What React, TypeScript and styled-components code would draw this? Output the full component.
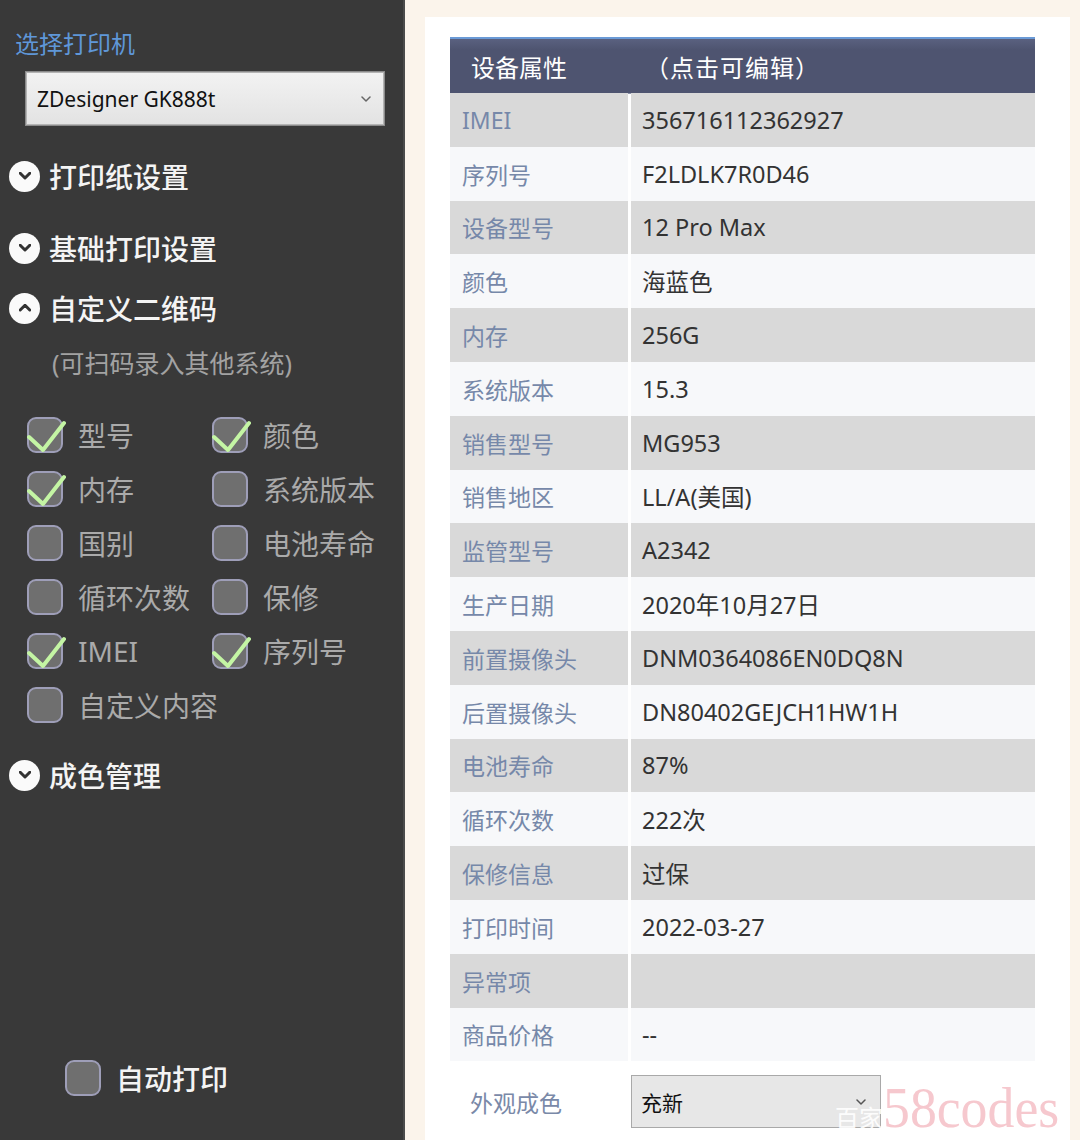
import React from "react"
import styled, { createGlobalStyle } from "styled-components"

const GlobalStyle = createGlobalStyle`
  html, body {
    margin: 0;
    padding: 0;
  }
  body {
    font-family: "Noto Sans", "Noto Sans CJK SC", sans-serif;
    background: #fbf4eb;
  }
`

const sections = [
  { title: "打印纸设置", open: false, top: 29 },
  { title: "基础打印设置", open: false, top: 28 },
]

const qrOptions = [
  { label: "型号", checked: true },
  { label: "颜色", checked: true },
  { label: "内存", checked: true },
  { label: "系统版本", checked: false },
  { label: "国别", checked: false },
  { label: "电池寿命", checked: false },
  { label: "循环次数", checked: false },
  { label: "保修", checked: false },
  { label: "IMEI", checked: true },
  { label: "序列号", checked: true },
  { label: "自定义内容", checked: false },
]

const attributes = [
  ["IMEI", "356716112362927"],
  ["序列号", "F2LDLK7R0D46"],
  ["设备型号", "12 Pro Max"],
  ["颜色", "海蓝色"],
  ["内存", "256G"],
  ["系统版本", "15.3"],
  ["销售型号", "MG953"],
  ["销售地区", "LL/A(美国)"],
  ["监管型号", "A2342"],
  ["生产日期", "2020年10月27日"],
  ["前置摄像头", "DNM0364086EN0DQ8N"],
  ["后置摄像头", "DN80402GEJCH1HW1H"],
  ["电池寿命", "87%"],
  ["循环次数", "222次"],
  ["保修信息", "过保"],
  ["打印时间", "2022-03-27"],
  ["异常项", ""],
  ["商品价格", "--"],
]

function Chevron({ up = false, size = 12, color = "#333", width = 3 }) {
  return (
    <svg width={size} height={size * 0.6} viewBox="0 0 10 6" fill="none">
      <path
        d={up ? "M1 5 L5 1 L9 5" : "M1 1 L5 5 L9 1"}
        stroke={color}
        strokeWidth={width}
        strokeLinecap="round"
        strokeLinejoin="round"
        vectorEffect="non-scaling-stroke"
      />
    </svg>
  )
}

function CheckBox({ checked }: { checked: boolean }) {
  return (
    <Box>
      {checked && (
        <CheckMark width="40" height="36" viewBox="0 0 40 36" fill="none">
          <path
            d="M2 20 L16 33 L37 6"
            stroke="#c4f5a4"
            strokeWidth="4"
            strokeLinecap="round"
            strokeLinejoin="round"
          />
        </CheckMark>
      )}
    </Box>
  )
}

export default function App() {
  return (
    <Page>
      <GlobalStyle />
      <Sidebar>
        <PrinterLabel>选择打印机</PrinterLabel>
        <PrinterSelect>
          <span>ZDesigner GK888t</span>
          <Chevron size={10} color="#666" width={1.5} />
        </PrinterSelect>

        {sections.map((s) => (
          <SectionHeader key={s.title} $top={s.top}>
            <CircleIcon>
              <Chevron up={s.open} />
            </CircleIcon>
            {s.title}
          </SectionHeader>
        ))}

        <SectionHeader $top={16}>
          <CircleIcon>
            <Chevron up />
          </CircleIcon>
          自定义二维码
        </SectionHeader>
        <SubTitle>(可扫码录入其他系统)</SubTitle>

        <OptionGrid>
          {qrOptions.map((o) => (
            <OptionItem key={o.label}>
              <CheckBox checked={o.checked} />
              <OptionLabel>{o.label}</OptionLabel>
            </OptionItem>
          ))}
        </OptionGrid>

        <SectionHeader $top={21}>
          <CircleIcon>
            <Chevron />
          </CircleIcon>
          成色管理
        </SectionHeader>

        <AutoPrint>
          <CheckBox checked={false} />
          <AutoPrintLabel>自动打印</AutoPrintLabel>
        </AutoPrint>
      </Sidebar>

      <Main>
        <Card>
          <HeaderRow>
            <HeaderCell>设备属性</HeaderCell>
            <HeaderCell $hint>（点击可编辑）</HeaderCell>
          </HeaderRow>
          {attributes.map(([label, value], i) => (
            <DataRow key={label} $shaded={i % 2 === 0}>
              <LabelCell>{label}</LabelCell>
              <ValueCell>{value}</ValueCell>
            </DataRow>
          ))}
          <ConditionRow>
            <ConditionLabel>外观成色</ConditionLabel>
            <ConditionSelect>
              <span>充新</span>
              <Chevron size={10} color="#555" width={1.5} />
            </ConditionSelect>
          </ConditionRow>
        </Card>
        <Watermark>
          <WatermarkCn>百家</WatermarkCn>
          <WatermarkEn>58codes</WatermarkEn>
        </Watermark>
      </Main>
    </Page>
  )
}

const Page = styled.div`
  display: flex;
  width: 1080px;
  height: 1140px;
  overflow: hidden;
`

const Sidebar = styled.aside`
  width: 405px;
  flex-shrink: 0;
  box-sizing: border-box;
  background: #393939;
  border-right: 2px solid #4b4b4b;
  display: flex;
  flex-direction: column;
  padding-top: 26px;
`

const PrinterLabel = styled.div`
  padding-left: 15px;
  font-size: 24px;
  line-height: 36px;
  color: #5f97d8;
`

const PrinterSelect = styled.div`
  margin: 10px 0 0 26px;
  width: 358px;
  height: 53px;
  box-sizing: border-box;
  display: flex;
  align-items: center;
  justify-content: space-between;
  padding: 0 12px 0 10px;
  background: linear-gradient(#f2f2f2, #e3e3e3);
  border: 1px solid #b4b4b4;
  box-shadow: 0 0 0 1px #8a8a8a;
  font-size: 21px;
  color: #111;
`

const SectionHeader = styled.div<{ $top: number }>`
  margin-top: ${(p) => p.$top}px;
  height: 44px;
  display: flex;
  align-items: center;
  gap: 9px;
  padding-left: 9px;
  font-size: 28px;
  font-weight: 500;
  color: #f4f4f4;
`

const CircleIcon = styled.span`
  width: 31px;
  height: 31px;
  border-radius: 50%;
  background: #fafafa;
  display: flex;
  align-items: center;
  justify-content: center;
  flex-shrink: 0;
`

const SubTitle = styled.div`
  margin-top: 15px;
  padding-left: 52px;
  font-size: 25px;
  line-height: 36px;
  color: #a2a2a2;
`

const OptionGrid = styled.div`
  margin-top: 27px;
  padding-left: 27px;
  display: grid;
  grid-template-columns: 185px 1fr;
  grid-auto-rows: 54px;
`

const OptionItem = styled.div`
  display: flex;
  align-items: center;
  gap: 15px;
`

const Box = styled.span`
  position: relative;
  width: 36px;
  height: 36px;
  box-sizing: border-box;
  flex-shrink: 0;
  border-radius: 9px;
  background: #6f6f6f;
  border: 2px solid #9e9eb8;
`

const CheckMark = styled.svg`
  position: absolute;
  left: -2px;
  top: -2px;
`

const OptionLabel = styled.span`
  font-size: 28px;
  color: #aaaaaa;
  white-space: nowrap;
`

const AutoPrint = styled.div`
  margin-top: auto;
  margin-bottom: 42px;
  padding-left: 65px;
  display: flex;
  align-items: center;
  gap: 15px;
`

const AutoPrintLabel = styled.span`
  font-size: 28px;
  font-weight: 500;
  color: #f4f4f4;
`

const Main = styled.main`
  position: relative;
  flex: 1;
  background: #fbf4eb;
  padding: 17px 10px 0 20px;
  display: flex;
`

const Card = styled.section`
  flex: 1;
  background: #ffffff;
  padding: 20px 35px 0 25px;
`

const HeaderRow = styled.div`
  display: grid;
  grid-template-columns: 181px 1fr;
  height: 56px;
  box-sizing: border-box;
  border-top: 2px solid #6a9ad6;
  background: linear-gradient(#5a6180, #4e5470 20%, #4e5470);
  box-shadow: 0 1px 0 #8a90a8;
`

const HeaderCell = styled.div<{ $hint?: boolean }>`
  display: flex;
  align-items: center;
  padding-left: ${(p) => (p.$hint ? "14px" : "21px")};
  font-family: "Noto Sans CJK SC", sans-serif;
  font-size: 24px;
  letter-spacing: ${(p) => (p.$hint ? "1px" : "0")};
  color: #ffffff;
`

const DataRow = styled.div<{ $shaded: boolean }>`
  display: grid;
  grid-template-columns: 178px 1fr;
  column-gap: 3px;
  height: 53.8px;
  & > * {
    background: ${(p) => (p.$shaded ? "#d9d9d9" : "#f7f8fa")};
  }
`

const LabelCell = styled.div`
  display: flex;
  align-items: center;
  padding-left: 12px;
  font-size: 23px;
  color: #7688a9;
`

const ValueCell = styled.div`
  display: flex;
  align-items: center;
  padding-left: 11px;
  font-size: 23.5px;
  color: #333333;
`

const ConditionRow = styled.div`
  display: grid;
  grid-template-columns: 181px 250px;
  height: 53px;
  margin-top: 14px;
`

const ConditionLabel = styled.div`
  display: flex;
  align-items: center;
  padding-left: 20px;
  font-size: 23px;
  color: #7a89a8;
`

const ConditionSelect = styled.div`
  box-sizing: border-box;
  display: flex;
  align-items: center;
  justify-content: space-between;
  padding: 0 14px 0 9px;
  background: #e7e7e7;
  border: 1px solid #a9a9a9;
  font-family: "Noto Sans CJK SC", sans-serif;
  font-size: 21px;
  color: #111;
`

const Watermark = styled.div`
  position: absolute;
  left: 430px;
  top: 1080px;
  display: flex;
  align-items: baseline;
  pointer-events: none;
`

const WatermarkCn = styled.span`
  font-family: "Noto Sans CJK SC", sans-serif;
  font-size: 24px;
  color: rgba(255, 255, 255, 0.9);
`

const WatermarkEn = styled.span`
  font-family: "Liberation Serif", serif;
  font-size: 56px;
  line-height: 56px;
  color: #f6c8ce;
  letter-spacing: 0;
  transform: scaleX(0.96);
  transform-origin: left;
`
